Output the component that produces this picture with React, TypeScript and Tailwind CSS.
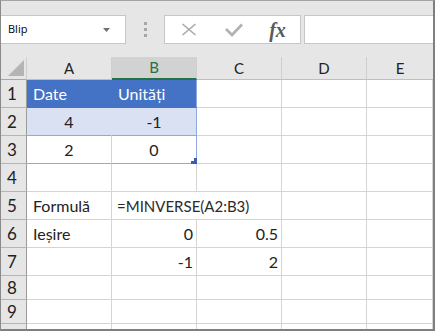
import React from "react";

const font = { fontFamily: "Lato, 'Open Sans', sans-serif" };

function RowHead({ n, last }: { n?: string; last?: boolean }) {
  return (
    <div
      className={`bg-[#e6e6e6] border-r border-r-[#9b9b9b] ${last ? "" : "border-b border-b-[#b5b5b5]"} flex items-center pl-[6px] text-[17px] leading-none text-[#222]`}
    >
      {n}
    </div>
  );
}

function ColHead({ label, selected, last }: { label: string; selected?: boolean; last?: boolean }) {
  return (
    <div
      className={`${selected ? "bg-[#d2d2d2] border-b-2 border-b-[#217346] text-[#217346]" : "bg-[#e6e6e6] border-b border-b-[#bfbfbf] text-[#222]"} ${last ? "" : "border-r border-r-[#cfcfcf]"} flex items-center justify-center text-[15px] leading-none`}
    >
      {label}
    </div>
  );
}

export default function App() {
  const base = "border-r border-b border-[#d4d4d4] flex items-end pb-[3px] text-[16px] leading-[20px] text-[#222] whitespace-nowrap";
  return (
    <div
      className="w-[435px] h-[331px] bg-[#e6e6e6] border-t border-l border-r-2 border-b-2 border-t-[#a3a3a3] border-l-[#8a8a8a] border-r-[#7f7f7f] border-b-[#7f7f7f] flex flex-col overflow-hidden"
      style={font}
    >
      {/* Toolbar */}
      <div className="h-[56px] shrink-0 flex items-start pt-[14px]">
        <div className="w-[125px] h-[29px] bg-white border-y border-r border-[#c6c6c6] flex items-center justify-between pl-[7px] pr-[15px]">
          <span className="text-[11px] text-black" style={{ fontFamily: "'Open Sans', sans-serif" }}>Blip</span>
          <svg width="7" height="4" viewBox="0 0 7 4">
            <path d="M0 0 H7 L3.5 4 Z" fill="#707070" />
          </svg>
        </div>
        <div className="w-[38px] h-[29px] flex flex-col items-center justify-center gap-[3px] pl-[1px]">
          <div className="w-[3px] h-[3px] bg-[#a6a6a6]" />
          <div className="w-[3px] h-[3px] bg-[#a6a6a6]" />
          <div className="w-[3px] h-[3px] bg-[#a6a6a6]" />
        </div>
        <div className="w-[137px] h-[29px] bg-white border border-[#c6c6c6] flex items-center">
          <div className="w-[45px] flex justify-center pl-[3px]">
            <svg width="16" height="13" viewBox="0 0 16 13">
              <path d="M1.5 1 L14.5 12 M14.5 1 L1.5 12" stroke="#a8a8a8" strokeWidth="1.6" fill="none" />
            </svg>
          </div>
          <div className="w-[45px] flex justify-center pl-[2px]">
            <svg width="18" height="14" viewBox="0 0 18 14">
              <path d="M1 6 L7 12 L17 1.5" stroke="#b3b3b3" strokeWidth="2.8" fill="none" />
            </svg>
          </div>
          <div className="w-[45px] flex justify-center">
            <span
              className="text-[20px] leading-none italic text-[#5a5a5a] font-bold"
              style={{ fontFamily: "'Liberation Serif', serif" }}
            >
              fx
            </span>
          </div>
        </div>
        <div className="ml-[3px] flex-1 h-[29px] bg-white border-y border-l border-[#c6c6c6]" />
      </div>

      {/* Grid */}
      <div className="flex-1 bg-white grid grid-cols-[26px_85px_85px_85px_85px_66px] grid-rows-[23px_repeat(7,28px)_24px_24px_1fr]">
        {/* header row */}
        <div className="bg-[#e6e6e6] border-r border-b border-r-[#cfcfcf] border-b-[#a8a8a8] relative">
          <svg className="absolute left-[7px] top-[3px]" width="16" height="16" viewBox="0 0 16 16">
            <path d="M16 0 V16 H0 Z" fill="#b4b4b4" />
          </svg>
        </div>
        <ColHead label="A" />
        <ColHead label="B" selected />
        <ColHead label="C" />
        <ColHead label="D" />
        <ColHead label="E" last />

        {/* row 1 */}
        <RowHead n="1" />
        <div className="bg-[#4472c4] border-r border-b border-[#4472c4] flex items-end pb-[3px] pl-[6px] text-[16px] leading-[20px] text-white">Date</div>
        <div className="bg-[#4472c4] border-r border-b border-r-[#8ea9db] border-b-[#4472c4] flex items-end pb-[3px] pl-[6px] text-[16px] leading-[20px] text-white">Unități</div>
        <div className={base} />
        <div className={base} />
        <div className={base} />

        {/* row 2 */}
        <RowHead n="2" />
        <div className="bg-[#d9e1f2] border-r border-b border-r-[#d9e1f2] border-b-[#8ea9db] flex items-end justify-center pb-[3px] text-[16px] leading-[20px] text-[#222]">4</div>
        <div className="bg-[#d9e1f2] border-r border-b border-[#8ea9db] flex items-end justify-center pb-[3px] text-[16px] leading-[20px] text-[#222]">-1</div>
        <div className={base} />
        <div className={base} />
        <div className={base} />

        {/* row 3 */}
        <RowHead n="3" />
        <div className="border-r border-b border-r-[#d4d4d4] border-b-[#8ea9db] flex items-end justify-center pb-[3px] text-[16px] leading-[20px] text-[#222]">2</div>
        <div className="border-r border-b border-[#8ea9db] flex items-end justify-center pb-[3px] text-[16px] leading-[20px] text-[#222] relative">
          0
          <svg className="absolute right-[-1px] bottom-[-1px]" width="6" height="6" viewBox="0 0 6 6">
            <path d="M3 0 H6 V6 H0 V3 H3 Z" fill="#3b5bb5" />
          </svg>
        </div>
        <div className={base} />
        <div className={base} />
        <div className={base} />

        {/* row 4 */}
        <RowHead n="4" />
        <div className={base} />
        <div className={base} />
        <div className={base} />
        <div className={base} />
        <div className={base} />

        {/* row 5 */}
        <RowHead n="5" />
        <div className={`${base} pl-[6px]`}>Formulă</div>
        <div className="border-b border-[#d4d4d4] flex items-end pb-[3px] pl-[5px] text-[15px] leading-[20px] text-[#2a2a2a] whitespace-nowrap overflow-visible relative z-10">
          =MINVERSE(A2:B3)
        </div>
        <div className={base} />
        <div className={base} />
        <div className={base} />

        {/* row 6 */}
        <RowHead n="6" />
        <div className={`${base} pl-[6px]`}>Ieșire</div>
        <div className={`${base} justify-end pr-[3px]`}>0</div>
        <div className={`${base} justify-end pr-[3px]`}>0.5</div>
        <div className={base} />
        <div className={base} />

        {/* row 7 */}
        <RowHead n="7" />
        <div className={base} />
        <div className={`${base} justify-end pr-[3px]`}>-1</div>
        <div className={`${base} justify-end pr-[3px]`}>2</div>
        <div className={base} />
        <div className={base} />

        {/* row 8 */}
        <RowHead n="8" />
        <div className={base} />
        <div className={base} />
        <div className={base} />
        <div className={base} />
        <div className={base} />

        {/* row 9 */}
        <RowHead n="9" />
        <div className={base} />
        <div className={base} />
        <div className={base} />
        <div className={base} />
        <div className={base} />

        {/* partial row */}
        <RowHead last />
        <div className="border-r border-[#d4d4d4]" />
        <div className="border-r border-[#d4d4d4]" />
        <div className="border-r border-[#d4d4d4]" />
        <div className="border-r border-[#d4d4d4]" />
        <div className="border-r border-[#d4d4d4]" />
      </div>
    </div>
  );
}
